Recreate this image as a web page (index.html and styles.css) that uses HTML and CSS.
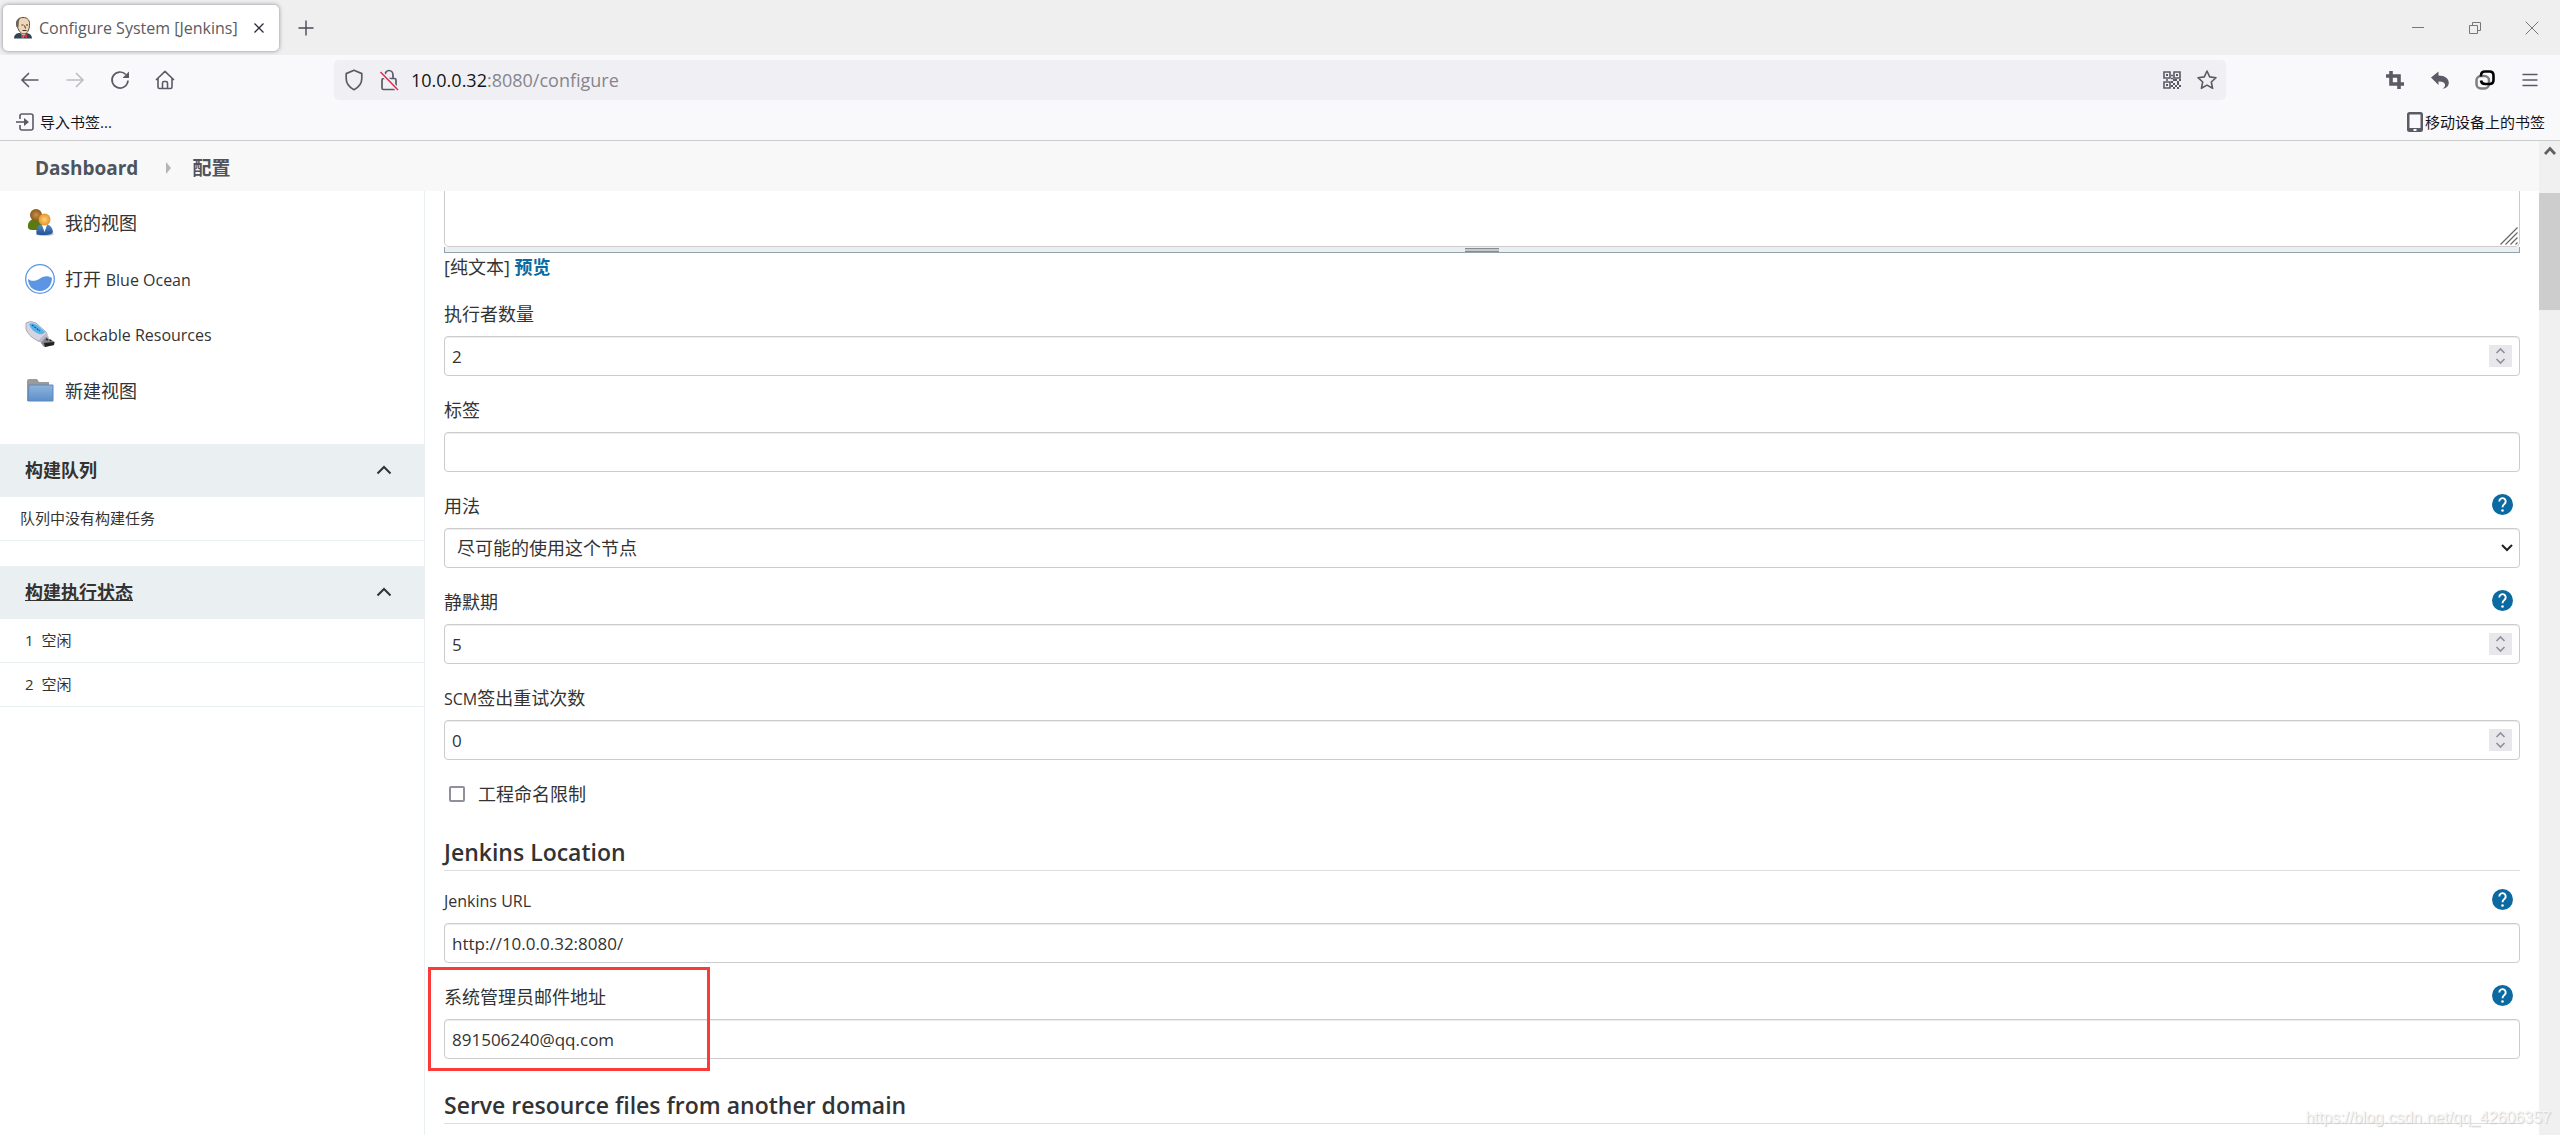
FILE: index.html
```html
<!DOCTYPE html>
<html lang="zh-CN">
<head>
<meta charset="utf-8">
<title>Configure System [Jenkins]</title>
<link rel="stylesheet" href="styles.css">
</head>
<body>
<div class="browser">
  <div class="tabstrip">
    <div class="tab">
      <svg class="favicon" width="20" height="22" viewBox="0 0 20 22"><path d="M1 21.500c0-3.500 2-5 5-5.500h8c3 .5 5 2.500 5 5.500z" fill="#2f4557"/><path d="M7 15l3 6 4-6z" fill="#fff"/><path d="M4 8c-1-5 2-7.500 6-7.500 5 0 7 3 6.500 8-.3 4-2 8.500-5.500 8.500-3.500 0-6-4-7-9z" fill="#f0d6b7" stroke="#5a4a3e" stroke-width="1"/><path d="M3.500 10C2 5 4 1.500 8 .8 5.500 3 6 5 5.500 10z" fill="#6b6259"/><path d="M8.500 8h2M13 8h2M11.500 8.500l1 3M9.500 13.500h4" stroke="#3c3430" fill="none"/><path d="M8 17l3 1.500 3-1.500v4l-3-1.500L8 21z" fill="#d33833"/></svg>
      <span class="tab-title">Configure System [Jenkins]</span>
      <button class="icon-btn tab-close" aria-label="Close tab"><svg width="12" height="12" viewBox="0 0 12 12"><path d="M1.500 1.500l9 9M10.500 1.500l-9 9" stroke="#2b2a33" stroke-width="1.300" fill="none"/></svg></button>
    </div>
    <button class="icon-btn new-tab" aria-label="New tab"><svg width="16" height="16" viewBox="0 0 16 16"><path d="M8 .5v15M.5 8h15" stroke="#4a4a55" stroke-width="1.400"/></svg></button>
    <div class="window-controls">
      <button class="icon-btn" aria-label="Minimize"><svg width="14" height="14" viewBox="0 0 14 14"><path d="M1 6.500h12" stroke="#777"/></svg></button>
      <button class="icon-btn" aria-label="Restore"><svg width="14" height="14" viewBox="0 0 14 14"><path d="M1.500 4.500h8v8h-8zM4.500 4.500v-3h8v8h-3" stroke="#777" fill="none"/></svg></button>
      <button class="icon-btn" aria-label="Close"><svg width="14" height="14" viewBox="0 0 14 14"><path d="M.7.700l12.600 12.600M13.300.700L.7 13.300" stroke="#777" fill="none"/></svg></button>
    </div>
  </div>

  <div class="navbar">
    <div class="nav-left">
      <button class="icon-btn" aria-label="Back"><svg width="20" height="20" viewBox="0 0 20 20"><path d="M18.500 10H2M9 3l-7 7 7 7" stroke="#5b5b66" stroke-width="1.600" fill="none"/></svg></button>
      <button class="icon-btn" aria-label="Forward"><svg width="20" height="20" viewBox="0 0 20 20"><path d="M1.500 10H18M11 3l7 7-7 7" stroke="#bdbdc2" stroke-width="1.600" fill="none"/></svg></button>
      <button class="icon-btn" aria-label="Reload"><svg width="20" height="20" viewBox="0 0 20 20"><path d="M15.800 4.500A8 8 0 1 0 18 10.500" stroke="#5b5b66" stroke-width="1.700" fill="none"/><path d="M19 1.500V8h-6.500z" fill="#5b5b66"/></svg></button>
      <button class="icon-btn" aria-label="Home"><svg width="20" height="20" viewBox="0 0 20 20"><path d="M1 10l9-8.700L19 10M3 8.500V17q0 1.500 1.500 1.500h11Q17 18.500 17 17V8.500M7.500 18v-5q0-1.500 1.500-1.500h2q1.500 0 1.500 1.500v5" stroke="#5b5b66" stroke-width="1.600" stroke-linejoin="round" fill="none"/></svg></button>
    </div>
    <div class="urlbar">
      <svg width="20" height="22" viewBox="0 0 20 22"><path d="M10 1.300l7.800 3.300v4.900c0 4.700-3.300 8.900-7.800 11.200-4.500-2.300-7.800-6.500-7.800-11.200V4.600z" stroke="#5b5b66" stroke-width="1.700" stroke-linejoin="round" fill="none"/></svg>
      <svg width="20" height="22" viewBox="0 0 20 22"><path d="M6 9V6a4 4.500 0 0 1 8 0v3M4.500 9.500h11q1.500 0 1.500 1.500v8q0 1.500-1.500 1.500h-11Q3 20.500 3 19v-8q0-1.500 1.500-1.500z" stroke="#5b5b66" stroke-width="1.700" fill="none"/><path d="M1.500 3l17.500 18" stroke="#f0f0f4" stroke-width="4"/><path d="M1.500 3l17.500 18" stroke="#e22850" stroke-width="1.500"/></svg>
      <div class="url"><span class="url-host">10.0.0.32</span>:8080/configure</div>
      <svg width="18" height="18" viewBox="0 0 18 18"><path d="M1 1h6v6H1zM11 1h6v6h-6zM1 11h6v6H1zM8 4.500h2M8 7.500h2M4 8v2" stroke="#5b5b66" stroke-width="1.600" fill="none"/><path d="M3 3h2v2H3zM13 3h2v2h-2zM3 13h2v2H3zM8 10h2v2H8zM12 8h2v2h-2zM16 8h2v2h-2zM10 12h2v2h-2zM14 12h2v2h-2zM12 14h2v2h-2zM16 14h2v2h-2zM8 14h2v2H8zM10 16h2v2h-2zM14 16h2v2h-2zM14 10h2v2h-2zM10 8h2v2h-2z" fill="#5b5b66"/></svg>
      <svg width="22" height="20" viewBox="0 0 22 20"><path d="M11 1l2.700 5.900 6.300.8-4.700 4.300 1.300 6.300-5.600-3.200-5.600 3.200 1.300-6.300L2 7.700l6.300-.8z" stroke="#5b5b66" stroke-width="1.600" stroke-linejoin="round" fill="none"/></svg>
    </div>
    <div class="nav-right">
      <button class="icon-btn" aria-label="Crop"><svg width="18" height="18" viewBox="0 0 18 18"><path d="M5 0v13h13M0 5h13v13" stroke="#5b5b66" stroke-width="3.600" fill="none"/></svg></button>
      <button class="icon-btn" aria-label="Undo"><svg width="18" height="18" viewBox="0 0 18 18"><path d="M0 6.500L7.500.5v4C14 4.500 18 8 17.800 12c-.2 3.500-3 5.500-6.300 5.500 2-1 2.800-2.500 2.500-4-.4-2.300-3-3.200-6.500-3v3.500z" fill="#5b5b66"/></svg></button>
      <button class="icon-btn" aria-label="Containers"><svg width="20" height="20" viewBox="0 0 20 20"><rect x="1.500" y="6" width="12.500" height="12.500" rx="4.500" stroke="#7d7d82" stroke-width="2.500" fill="none"/><path d="M6 6.500V5.500Q6 1.500 10 1.500h4.500q4 0 4 4V10q0 4-4 4H10q-3.500 0-4-3.500" stroke="#000" stroke-width="2.600" fill="none"/></svg></button>
      <button class="icon-btn" aria-label="Menu"><svg width="16" height="14" viewBox="0 0 16 14"><path d="M1 1.500h14M1 7h14M1 12.500h14" stroke="#5b5b66" stroke-width="1.400" stroke-linecap="round"/></svg></button>
    </div>
  </div>

  <div class="bookmarks">
    <a class="bookmark" href="#"><svg width="20" height="18" viewBox="0 0 20 18"><path d="M5 6V3q0-2 2-2h9q2 0 2 2v12q0 2-2 2H7q-2 0-2-2v-3" stroke="#5b5b66" stroke-width="1.600" fill="none"/><path d="M1 9h10" stroke="#5b5b66" stroke-width="1.600"/><path d="M9 5l5 4-5 4z" fill="#5b5b66"/></svg>导入书签...</a>
    <a class="bookmark bookmark-mobile" href="#"><svg width="16" height="20" viewBox="0 0 16 20"><path fill-rule="evenodd" d="M2.500 0h11Q16 0 16 2.500v15q0 2.500-2.500 2.500h-11Q0 20 0 17.500v-15Q0 0 2.500 0zM2.500 2.500v13.500h11V2.500zM6.500 17v2h3v-2z" fill="#5b5b66"/></svg>移动设备上的书签</a>
  </div>

  <div class="viewport">
    <div class="page">
      <nav class="breadcrumb">
        <a href="#">Dashboard</a>
        <svg class="crumb-arrow" width="6" height="12" viewBox="0 0 6 12"><path d="M0 0l5 6-5 6z" fill="#b5b5b5"/></svg>
        <a href="#">配置</a>
      </nav>
      <div class="columns">
        <aside class="sidebar">
          <div class="tasks">
            <a class="task" href="#"><svg width="30" height="30" viewBox="0 0 30 30">
              <defs>
                <radialGradient id="skinA"><stop offset="0" stop-color="#c9924c"/><stop offset="1" stop-color="#8a5716"/></radialGradient>
                <radialGradient id="skinB"><stop offset="0" stop-color="#ffd07a"/><stop offset="1" stop-color="#e2962b"/></radialGradient>
                <linearGradient id="blueShirt" x2="0" y2="1"><stop offset="0" stop-color="#5a8fd0"/><stop offset="1" stop-color="#204f96"/></linearGradient>
              </defs>
              <ellipse cx="20" cy="26" rx="9" ry="2" fill="#ccc"/><path d="M3 20c-1-6 3-9 7-9s7 3 7 7l-2 4H7q-3 0-4-2z" fill="#5c7a12"/><circle cx="11" cy="7" r="6" fill="url(#skinA)"/><path d="M11.500 26c-1-7 3-10 8-10s8 3 8.500 8q-.5 3-8.500 3t-8-1z" fill="url(#blueShirt)"/><path d="M17 17h5l-2.500 7z" fill="#fff"/><circle cx="19.500" cy="11.500" r="6" fill="url(#skinB)"/></svg><span>我的视图</span></a>
            <a class="task" href="#"><svg width="30" height="30" viewBox="0 0 30 30"><circle cx="15" cy="15" r="14.300" fill="#fff" stroke="#5b95e4" stroke-width="1.300"/><path d="M3 15c4 3 8 2 12-.5s8-3 12-.5c0 7-5 13-12 13S3 22 3 15z" fill="#5b95e4"/></svg><span>打开 <span class="latin">Blue Ocean</span></span></a>
            <a class="task" href="#"><svg width="30" height="30" viewBox="0 0 30 30"><path d="M1 3Q5 0 11 3l10 9q3 4-2 8-2 3-6 1Q3 16 1 9z" fill="#d5d5e2" stroke="#a8a8b8" stroke-width="1"/><path d="M4 4q3-2 8 1l8 7q-2 3-6 2Q6 11 4 4z" fill="#54b4ee"/><path d="M7 5l8 6" stroke="#1d5f9a" stroke-width="1.500" stroke-dasharray="2 1"/><path d="M13 21l7-7 4 3-6 7z" fill="#b8b8ca"/><path d="M21 17l9 5-1 3-10 2-3-4z" fill="#85858c"/><path d="M19 23l10-1v3l-9 2z" fill="#222"/><path d="M21 19l2 1M24.500 20l2 1" stroke="#333" stroke-width="1.500"/></svg><span class="latin">Lockable Resources</span></a>
            <a class="task" href="#"><svg width="30" height="30" viewBox="0 0 30 30"><defs><linearGradient id="folder" x2="0" y2="1"><stop offset="0" stop-color="#8fb5dd"/><stop offset="1" stop-color="#5c8fca"/></linearGradient></defs><path d="M2 5q0-2 2-2h8l2 3h10v4H8L4 25H2z" fill="#9a9a9a"/><path d="M4 9h24v16H3z" fill="url(#folder)" stroke="#5f88b8" stroke-width="1"/></svg><span>新建视图</span></a>
          </div>
          <section class="panel">
            <h2 class="panel-head"><span>构建队列</span><svg width="16" height="10" viewBox="0 0 16 10"><path d="M1.500 8.500L8 2l6.500 6.500" stroke="#333" stroke-width="2" fill="none"/></svg></h2>
            <div class="panel-row panel-empty">队列中没有构建任务</div>
          </section>
          <section class="panel">
            <h2 class="panel-head"><a href="#">构建执行状态</a><svg width="16" height="10" viewBox="0 0 16 10"><path d="M1.500 8.500L8 2l6.500 6.500" stroke="#333" stroke-width="2" fill="none"/></svg></h2>
            <div class="panel-row"><span>1</span>空闲</div>
            <div class="panel-row"><span>2</span>空闲</div>
          </section>
        </aside>

        <form class="config">
          <div class="message-box">
            <textarea class="message" aria-label="系统消息"></textarea>
            <svg class="resizer" width="18" height="18" viewBox="0 0 18 18"><path d="M.5 17.500l17-17M5.500 17.500l12-12M10.500 17.500l7-7M15.500 17.500l2-2" stroke="#666" stroke-width="1.200"/></svg>
          </div>
          <div class="grip"><div class="grip-handle"></div></div>
          <div class="preview">[纯文本] <a href="#">预览</a></div>

          <div class="group">
            <div class="label-row"><label for="executors">执行者数量</label></div>
            <div class="field"><input id="executors" type="number" value="2"><svg class="spinner" width="23" height="22" viewBox="0 0 23 22"><path d="M7.500 8l4-4 4 4M7.500 14l4 4 4-4" stroke="#8f8f9d" stroke-width="1.600" fill="none"/></svg></div>
          </div>
          <div class="group">
            <div class="label-row"><label for="labels">标签</label></div>
            <div class="field"><input id="labels" type="text"></div>
          </div>
          <div class="group">
            <div class="label-row"><label for="usage">用法</label><button type="button" class="help" aria-label="帮助"><svg width="21" height="21" viewBox="0 0 21 21"><circle cx="10.500" cy="10.500" r="10.500" fill="#0b6aa2"/><path d="M7.300 7.500a3.200 3.200 0 1 1 5.300 2.300c-1.300 1-2.100 1.600-2.100 3.400" stroke="#fff" stroke-width="1.900" fill="none"/><circle cx="10.500" cy="16.500" r="1.300" fill="#fff"/></svg></button></div>
            <div class="field select-field"><select id="usage"><option>尽可能的使用这个节点</option></select><svg width="12" height="8" viewBox="0 0 12 8"><path d="M1 1l5 5 5-5" stroke="#222" stroke-width="2" fill="none"/></svg></div>
          </div>
          <div class="group">
            <div class="label-row"><label for="quiet">静默期</label><button type="button" class="help" aria-label="帮助"><svg width="21" height="21" viewBox="0 0 21 21"><circle cx="10.500" cy="10.500" r="10.500" fill="#0b6aa2"/><path d="M7.300 7.500a3.200 3.200 0 1 1 5.300 2.300c-1.300 1-2.100 1.600-2.100 3.400" stroke="#fff" stroke-width="1.900" fill="none"/><circle cx="10.500" cy="16.500" r="1.300" fill="#fff"/></svg></button></div>
            <div class="field"><input id="quiet" type="number" value="5"><svg class="spinner" width="23" height="22" viewBox="0 0 23 22"><path d="M7.500 8l4-4 4 4M7.500 14l4 4 4-4" stroke="#8f8f9d" stroke-width="1.600" fill="none"/></svg></div>
          </div>
          <div class="group">
            <div class="label-row"><label for="retry"><span class="latin">SCM</span>签出重试次数</label></div>
            <div class="field"><input id="retry" type="number" value="0"><svg class="spinner" width="23" height="22" viewBox="0 0 23 22"><path d="M7.500 8l4-4 4 4M7.500 14l4 4 4-4" stroke="#8f8f9d" stroke-width="1.600" fill="none"/></svg></div>
          </div>
          <div class="check-row"><input type="checkbox" id="naming"><label for="naming">工程命名限制</label></div>

          <h2 class="section-title">Jenkins Location</h2>
          <div class="group first">
            <div class="label-row"><label for="url" class="latin">Jenkins URL</label><button type="button" class="help" aria-label="帮助"><svg width="21" height="21" viewBox="0 0 21 21"><circle cx="10.500" cy="10.500" r="10.500" fill="#0b6aa2"/><path d="M7.300 7.500a3.200 3.200 0 1 1 5.300 2.300c-1.300 1-2.100 1.600-2.100 3.400" stroke="#fff" stroke-width="1.900" fill="none"/><circle cx="10.500" cy="16.500" r="1.300" fill="#fff"/></svg></button></div>
            <div class="field"><input id="url" type="text" value="http://10.0.0.32:8080/"></div>
          </div>
          <div class="group highlighted">
            <div class="label-row"><label for="email">系统管理员邮件地址</label><button type="button" class="help" aria-label="帮助"><svg width="21" height="21" viewBox="0 0 21 21"><circle cx="10.500" cy="10.500" r="10.500" fill="#0b6aa2"/><path d="M7.300 7.500a3.200 3.200 0 1 1 5.300 2.300c-1.300 1-2.100 1.600-2.100 3.400" stroke="#fff" stroke-width="1.900" fill="none"/><circle cx="10.500" cy="16.500" r="1.300" fill="#fff"/></svg></button></div>
            <div class="field"><input id="email" type="text" value="891506240@qq.com"></div>
            <div class="marker"></div>
          </div>
          <h2 class="section-title">Serve resource files from another domain</h2>
        </form>
      </div>
    </div>
    <div class="scrollbar">
      <svg width="12" height="10" viewBox="0 0 12 10"><path d="M1 8l5-5.500L11 8" stroke="#606060" stroke-width="2.800" fill="none"/></svg>
      <div class="thumb"></div>
    </div>
  </div>
  <div class="watermark">https://blog.csdn.net/qq_42606357</div>
</div>
</body>
</html>
```
FILE: styles.css
```css
* { box-sizing: border-box; }

body {
  margin: 0;
  font-family: "Open Sans", "Noto Sans CJK SC", sans-serif;
  font-size: 18px;
  line-height: 24px;
  color: #333;
  background: #fff;
}

a { color: inherit; text-decoration: none; }
svg { display: block; flex: none; }
h2 { margin: 0; }
.latin { font-size: 16px; }

.browser {
  position: relative;
  display: flex;
  flex-direction: column;
  height: 100vh;
  overflow: hidden;
}

.icon-btn {
  display: flex;
  align-items: center;
  justify-content: center;
  padding: 0;
  border: 0;
  background: none;
}

/* Tab strip */
.tabstrip {
  display: flex;
  align-items: center;
  height: 55px;
  flex: none;
  padding: 0 0 0 3px;
  background: #efefef;
}
.tab {
  display: flex;
  align-items: center;
  width: 276px;
  height: 46px;
  padding: 0 10px;
  border-radius: 5px;
  background: #fff;
  box-shadow: 0 0 4px #888894;
}
.tab-title {
  flex: 1;
  margin-left: 6px;
  font-size: 16px;
  white-space: nowrap;
  color: #5b5b60;
}
.tab-close { width: 20px; }
.new-tab { width: 54px; }
.window-controls { display: flex; margin-left: auto; }
.window-controls .icon-btn { width: 57px; height: 55px; }

/* Navigation bar */
.navbar {
  display: flex;
  align-items: center;
  flex: none;
  height: 50px;
  background: #f9f9fb;
}
.nav-left, .nav-right {
  display: flex;
  align-items: center;
  flex: none;
  width: 334px;
}
.nav-left { padding-left: 7px; }
.nav-right { justify-content: flex-end; padding-right: 8px; }
.nav-left .icon-btn, .nav-right .icon-btn { width: 45px; height: 40px; }
.urlbar {
  display: flex;
  align-items: center;
  gap: 15px;
  flex: 1;
  height: 40px;
  padding: 0 8px 0 10px;
  border-radius: 5px;
  background: #f0f0f4;
}
.url { flex: 1; color: #85858c; margin-left: -3px; }
.url-host { color: #15141a; }

/* Bookmarks */
.bookmarks {
  display: flex;
  align-items: center;
  justify-content: space-between;
  flex: none;
  height: 36px;
  padding: 0 15px 1px;
  border-bottom: 1px solid #ccc;
  background: #f9f9fb;
  font-size: 15px;
  color: #15141a;
}
.bookmark { display: flex; align-items: center; gap: 5px; }
.bookmark-mobile { gap: 2px; }

/* Page */
.viewport { display: flex; flex: 1; min-height: 0; }
.page { display: flex; flex-direction: column; flex: 1; min-width: 0; }
.breadcrumb {
  display: flex;
  align-items: center;
  flex: none;
  gap: 20px;
  height: 50px;
  padding: 4px 35px 0;
  background: #f8f8f8;
  font-size: 19px;
  font-weight: 700;
  color: #4d545d;
}
.crumb-arrow { margin-left: 8px; }
.columns { display: flex; flex: 1; }

.sidebar { flex: none; width: 425px; border-right: 1px solid #eaeff2; }
.tasks { padding: 4px 0 25px; }
.task {
  display: flex;
  align-items: center;
  gap: 10px;
  height: 56px;
  padding-left: 25px;
}
.panel { margin-bottom: 25px; }
.panel-head {
  display: flex;
  align-items: center;
  justify-content: space-between;
  height: 53px;
  padding: 0 32px 2px 25px;
  background: #eaeff2;
  font-size: 18px;
  font-weight: 700;
}
.panel-head a { text-decoration: underline; }
.panel-row {
  display: flex;
  align-items: center;
  gap: 8px;
  height: 44px;
  padding: 0 0 1px 25px;
  border-bottom: 1px solid #eaeff2;
  font-size: 15px;
}
.panel-empty { padding-left: 20px; }

/* Configuration form */
.config { flex: 1; min-width: 0; padding: 0 19px; }
.message-box { position: relative; }
.message {
  display: block;
  width: 100%;
  height: 56px;
  border: 1px solid #ccc;
  border-top: 0;
  border-radius: 0 0 5px 5px;
  resize: none;
}
.resizer { position: absolute; right: 2px; bottom: 2px; }
.grip {
  display: flex;
  justify-content: center;
  height: 6px;
  padding-top: 1px;
  border: 1px solid #94a3ab;
  border-top: 0;
  background: #eaeff2;
}
.grip-handle {
  width: 34px;
  height: 4px;
  border: solid #8a8c8d;
  border-width: 1px 0;
  background: #c6c8ca;
}
.preview { margin-top: 2px; height: 25px; }
.preview a { font-weight: 700; color: #0b6aa2; }

.group { margin-top: 22px; }
.group.first { margin-top: 18px; }
.label-row {
  display: flex;
  align-items: flex-start;
  justify-content: space-between;
  height: 24px;
  margin-bottom: 10px;
}
.help { padding: 0; margin-right: 7px; border: 0; background: none; }
.field {
  display: flex;
  align-items: center;
  height: 40px;
  padding: 0 7px;
  border: 1px solid #ccc;
  border-radius: 4px;
  background: #fff;
  box-shadow: inset 0 1px 1px rgba(0, 0, 0, 0.075);
}
.field input, .field select {
  flex: 1;
  min-width: 0;
  height: 36px;
  padding: 0;
  border: 0;
  outline: 0;
  background: none;
  font: inherit;
  color: inherit;
  appearance: none;
}
.field input { font-size: 17px; }
.field input[type="number"] { appearance: textfield; }
.select-field { padding: 0 6px 0 12px; }
.spinner { background: #e8e8ec; }

.check-row {
  display: flex;
  align-items: center;
  gap: 13px;
  height: 24px;
  margin-top: 22px;
  padding-left: 5px;
}
.check-row input {
  width: 16px;
  height: 16px;
  margin: 0;
  border: 2px solid #8f8f9d;
  border-radius: 2px;
  appearance: none;
}

.section-title {
  margin-top: 30px;
  padding-bottom: 2px;
  border-bottom: 1px solid #ddd;
  font-size: 23px;
  line-height: 32px;
  font-weight: 600;
}

.highlighted { position: relative; }
.marker {
  position: absolute;
  top: -18px;
  left: -16px;
  width: 282px;
  height: 104px;
  border: 3px solid #fb3a3a;
  pointer-events: none;
}

/* Scrollbar */
.scrollbar {
  display: flex;
  flex-direction: column;
  align-items: center;
  flex: none;
  width: 21px;
  padding-top: 5px;
  background: #f0f0f0;
}
.thumb { width: 100%; height: 117px; margin-top: 37px; background: #cdcdcd; }

.watermark {
  position: absolute;
  right: 9px;
  bottom: 5px;
  font: 16px/24px "Liberation Sans", sans-serif;
  color: #f6f6f6;
  text-shadow: 1px 1px 1px #ccc;
}
```
